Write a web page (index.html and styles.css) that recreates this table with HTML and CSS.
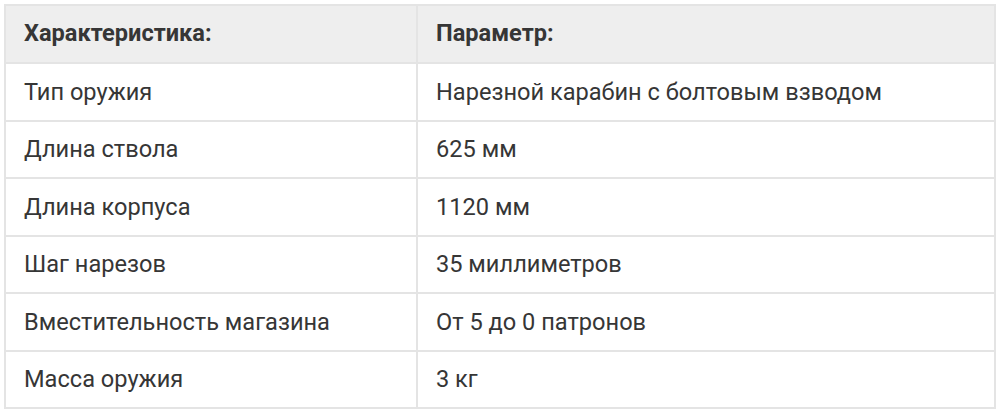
FILE: index.html
```
<!DOCTYPE html>
<html lang="ru">
<head>
<meta charset="utf-8">
<link rel="stylesheet" href="styles.css">
</head>
<body>
<div class="wrap">
<table class="spec">
<thead>
<tr><th>Характеристика:</th><th>Параметр:</th></tr>
</thead>
<tbody>
<tr><td>Тип оружия</td><td>Нарезной карабин с болтовым взводом</td></tr>
<tr><td>Длина ствола</td><td>625 мм</td></tr>
<tr><td>Длина корпуса</td><td>1120 мм</td></tr>
<tr><td>Шаг нарезов</td><td>35 миллиметров</td></tr>
<tr><td>Вместительность магазина</td><td>От 5 до 0 патронов</td></tr>
<tr><td>Масса оружия</td><td>3 кг</td></tr>
</tbody>
</table>
</div>
</body>
</html>
```
FILE: styles.css
```
html, body {
  margin: 0;
  padding: 0;
  background: #fff;
}
.wrap {
  padding: 4px 4px 0 4px;
}
.spec {
  width: 992px;
  border-collapse: collapse;
  font-family: Roboto, "Noto Sans", sans-serif;
  font-size: 23.6px;
  color: #363636;
}
.spec th, .spec td {
  border: 2px solid #e4e4e4;
  height: 55.5px;
  padding: 0 18px;
  text-align: left;
  vertical-align: middle;
  white-space: nowrap;
}
.spec th {
  background: #eeeeee;
  font-weight: 700;
  height: 54px;
  padding-bottom: 2px;
}
.spec th:first-child, .spec td:first-child {
  width: 374px;
}
```
